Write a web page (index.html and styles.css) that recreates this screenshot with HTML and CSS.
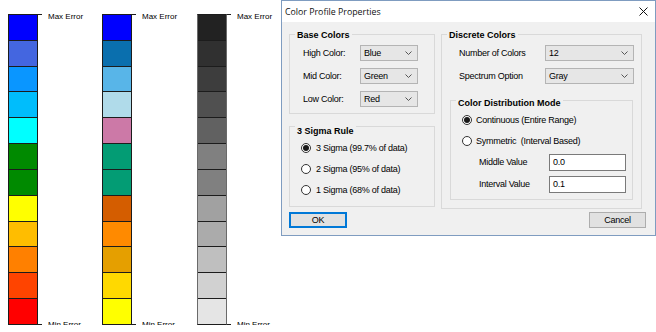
FILE: index.html
```html
<!DOCTYPE html>
<html>
<head>
<meta charset="utf-8">
<title>Color Profile Properties</title>
<link rel="stylesheet" href="styles.css">
</head>
<body>
<div class="page">

  <!-- rainbow legend -->
  <div class="legend">
    <div class="bar">
      <span class="seg" style="background:#0000ff"></span>
      <span class="seg" style="background:#4466e0"></span>
      <span class="seg" style="background:#0a96ff"></span>
      <span class="seg" style="background:#00bdfc"></span>
      <span class="seg" style="background:#00ffff"></span>
      <span class="seg" style="background:#008a00"></span>
      <span class="seg" style="background:#008a00"></span>
      <span class="seg" style="background:#ffff00"></span>
      <span class="seg" style="background:#ffbd00"></span>
      <span class="seg" style="background:#ff8000"></span>
      <span class="seg" style="background:#ff4400"></span>
      <span class="seg" style="background:#ff0000"></span>
    </div>
    <div class="marks">
      <div class="mark top"><i class="tick"></i><span>Max Error</span></div>
      <div class="mark"><i class="tick"></i><span>Min Error</span></div>
    </div>
  </div>

  <!-- colour blind legend -->
  <div class="legend">
    <div class="bar">
      <span class="seg" style="background:#0000ff"></span>
      <span class="seg" style="background:#0a6fae"></span>
      <span class="seg" style="background:#58b5e8"></span>
      <span class="seg" style="background:#b0dbea"></span>
      <span class="seg" style="background:#cc79a7"></span>
      <span class="seg" style="background:#039c74"></span>
      <span class="seg" style="background:#039c74"></span>
      <span class="seg" style="background:#d45d00"></span>
      <span class="seg" style="background:#ff8a00"></span>
      <span class="seg" style="background:#e59f00"></span>
      <span class="seg" style="background:#ffd900"></span>
      <span class="seg" style="background:#ffff00"></span>
    </div>
    <div class="marks">
      <div class="mark top"><i class="tick"></i><span>Max Error</span></div>
      <div class="mark"><i class="tick"></i><span>Min Error</span></div>
    </div>
  </div>

  <!-- gray legend -->
  <div class="legend">
    <div class="bar gray">
      <span class="seg" style="background:#222222"></span>
      <span class="seg" style="background:#303030"></span>
      <span class="seg" style="background:#3d3d3d"></span>
      <span class="seg" style="background:#505050"></span>
      <span class="seg" style="background:#616161"></span>
      <span class="seg" style="background:#808080"></span>
      <span class="seg" style="background:#808080"></span>
      <span class="seg" style="background:#a1a1a1"></span>
      <span class="seg" style="background:#ababab"></span>
      <span class="seg" style="background:#bfbfbf"></span>
      <span class="seg" style="background:#d1d1d1"></span>
      <span class="seg" style="background:#e5e5e5"></span>
    </div>
    <div class="marks">
      <div class="mark top"><i class="tick"></i><span>Max Error</span></div>
      <div class="mark"><i class="tick"></i><span>Min Error</span></div>
    </div>
  </div>

  <!-- dialog -->
  <div class="dialog">
    <div class="titlebar">
      <span class="title">Color Profile Properties</span>
      <svg class="close" width="9" height="9" viewBox="0 0 9 9">
        <path d="M0.5 0.5L8.5 8.5M8.5 0.5L0.5 8.5" stroke="#111" stroke-width="1" fill="none"/>
      </svg>
    </div>

    <div class="dlg-body">
      <div class="groups">
        <div class="col">
          <div class="group base">
            <div class="group-title">Base Colors</div>
            <div class="row"><span class="lbl">High Color:</span><div class="combo w-small"><span>Blue</span><svg width="7" height="4" viewBox="0 0 7 4"><path d="M0.5 0.5L3.5 3.5L6.5 0.5" stroke="#555" fill="none"/></svg></div></div>
            <div class="row"><span class="lbl">Mid Color:</span><div class="combo w-small"><span>Green</span><svg width="7" height="4" viewBox="0 0 7 4"><path d="M0.5 0.5L3.5 3.5L6.5 0.5" stroke="#555" fill="none"/></svg></div></div>
            <div class="row"><span class="lbl">Low Color:</span><div class="combo w-small"><span>Red</span><svg width="7" height="4" viewBox="0 0 7 4"><path d="M0.5 0.5L3.5 3.5L6.5 0.5" stroke="#555" fill="none"/></svg></div></div>
          </div>

          <div class="group sigma">
            <div class="group-title">3 Sigma Rule</div>
            <div class="radio-row"><i class="radio on"></i>3 Sigma (99.7% of data)</div>
            <div class="radio-row"><i class="radio"></i>2 Sigma (95% of data)</div>
            <div class="radio-row"><i class="radio"></i>1 Sigma (68% of data)</div>
          </div>
        </div>

        <div class="col">
          <div class="group discrete">
            <div class="group-title">Discrete Colors</div>
            <div class="row"><span class="lbl wide">Number of Colors</span><div class="combo w-big"><span>12</span><svg width="7" height="4" viewBox="0 0 7 4"><path d="M0.5 0.5L3.5 3.5L6.5 0.5" stroke="#555" fill="none"/></svg></div></div>
            <div class="row"><span class="lbl wide">Spectrum Option</span><div class="combo w-big"><span>Gray</span><svg width="7" height="4" viewBox="0 0 7 4"><path d="M0.5 0.5L3.5 3.5L6.5 0.5" stroke="#555" fill="none"/></svg></div></div>

            <div class="group mode">
              <div class="group-title">Color Distribution Mode</div>
              <div class="radio-row"><i class="radio on"></i>Continuous (Entire Range)</div>
              <div class="radio-row"><i class="radio"></i>Symmetric&nbsp; (Interval Based)</div>
              <div class="field-row"><span class="lbl">Middle Value</span><div class="textbox">0.0</div></div>
              <div class="field-row"><span class="lbl">Interval Value</span><div class="textbox">0.1</div></div>
            </div>
          </div>
        </div>
      </div>

      <div class="buttons">
        <div class="btn default">OK</div>
        <div class="btn">Cancel</div>
      </div>
    </div>
  </div>

</div>
</body>
</html>
```

FILE: styles.css
```css
body {
    margin: 0;
    background: #fff;
    font-family: "Liberation Sans", Arial, sans-serif;
    color: #000;
}

.page {
    display: grid;
    grid-template-columns: 94px 95px 84px 375px;
    align-items: start;
    padding-left: 8px;
}

/* legends */
.legend {
    display: flex;
    padding-top: 14px;
}

.bar {
    width: 30px;
    height: 311px;
    box-sizing: border-box;
    border: 1px solid #1c1c1c;
    display: flex;
    flex-direction: column;
}

.bar.gray {
    border-left-color: #6a6a6a;
    border-right-color: #6a6a6a;
}

.seg {
    flex: 1;
    border-top: 1px solid #1c1c1c;
}

.seg:first-child {
    border-top: 0;
}

.marks {
    height: 311px;
    display: flex;
    flex-direction: column;
    justify-content: space-between;
}

.mark {
    height: 11px;
    margin: -5px 0;
    display: flex;
    align-items: center;
    gap: 6px;
    font-size: 8px;
    white-space: nowrap;
}

.mark.top span {
    padding-top: 3px;
}

.tick {
    width: 4px;
    height: 1px;
    background: #1c1c1c;
}

/* dialog */
.dialog {
    width: 375px;
    height: 236px;
    box-sizing: border-box;
    border: 1px solid #7f9cc0;
    background: #f0f0f0;
    display: flex;
    flex-direction: column;
    font-size: 9px;
    letter-spacing: -0.25px;
}

.titlebar {
    height: 21px;
    background: #fff;
    display: flex;
    align-items: center;
    justify-content: space-between;
    padding: 0 7px 0 3px;
}

.title {
    font-family: "Open Sans", "Liberation Sans", sans-serif;
    font-size: 8.8px;
    letter-spacing: 0;
    color: #111;
}

.dlg-body {
    flex: 1;
    padding: 12px 9px 0 7px;
    display: flex;
    flex-direction: column;
}

.groups {
    display: grid;
    grid-template-columns: 146px 201px;
    column-gap: 6px;
}

.group {
    border: 1px solid #d9d9d9;
}

.group-title {
    width: fit-content;
    margin: -7px 0 0 5px;
    padding: 0 2px;
    line-height: 12px;
    background: #f0f0f0;
    font-weight: bold;
    letter-spacing: 0;
}

.base {
    padding: 1px 0 3px 0;
}

.base .row {
    padding-left: 13px;
}

.sigma {
    margin-top: 12px;
    padding: 5px 0 6px 0;
}

.sigma .radio-row {
    padding-left: 11px;
}

.discrete {
    padding: 1px 0 8px 0;
}

.discrete .row {
    padding-left: 17px;
}

.mode {
    margin: 13px 8px 0 8px;
    padding: 3px 0 4px 0;
}

.mode .radio-row {
    padding-left: 11px;
    gap: 4px;
}

.row {
    height: 23px;
    display: flex;
    align-items: center;
}

.lbl {
    width: 57px;
}

.lbl.wide {
    width: 86px;
}

.combo {
    height: 16px;
    box-sizing: border-box;
    border: 1px solid #b4b4b4;
    background: #e6e6e6;
    display: flex;
    align-items: center;
    justify-content: space-between;
    padding: 0 5px 0 3px;
}

.w-small {
    width: 58px;
}

.w-big {
    width: 89px;
}

.radio-row {
    height: 21px;
    display: flex;
    align-items: center;
    gap: 5px;
}

.radio {
    width: 10px;
    height: 10px;
    box-sizing: border-box;
    border: 1px solid #333;
    border-radius: 50%;
    background: #fff;
    display: flex;
    align-items: center;
    justify-content: center;
}

.radio.on::after {
    content: "";
    width: 6px;
    height: 6px;
    border-radius: 50%;
    background: #1a1a1a;
}

.field-row {
    height: 22px;
    display: flex;
    align-items: center;
    padding-left: 28px;
}

.field-row .lbl {
    width: 70px;
}

.textbox {
    width: 77px;
    height: 17px;
    box-sizing: border-box;
    border: 1px solid #7a7a7a;
    background: #fff;
    padding: 2px 3px;
    line-height: 11px;
}

.buttons {
    display: flex;
    justify-content: space-between;
    margin-top: 3px;
}

.btn {
    width: 57px;
    height: 16px;
    box-sizing: border-box;
    border: 1px solid #adadad;
    background: #e1e1e1;
    display: flex;
    align-items: center;
    justify-content: center;
}

.btn.default {
    width: 58px;
    border-color: #0078d7;
    box-shadow: inset 0 0 0 1px #0078d7;
}
```
